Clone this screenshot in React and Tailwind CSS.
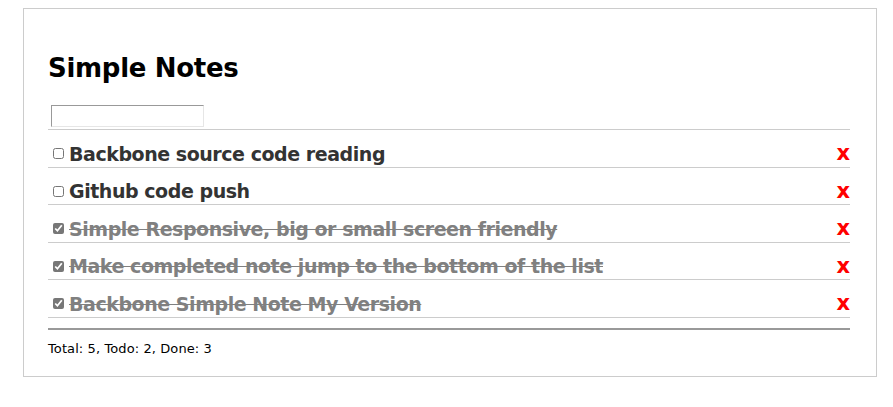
import React, { useState } from 'react';

const initialNotes = [
  { id: 1, title: 'Backbone source code reading', done: false },
  { id: 2, title: 'Github code push', done: false },
  { id: 3, title: 'Simple Responsive, big or small screen friendly', done: true },
  { id: 4, title: 'Make completed note jump to the bottom of the list', done: true },
  { id: 5, title: 'Backbone Simple Note My Version', done: true },
];

const App = () => {
  const [notes, setNotes] = useState(initialNotes);
  const [text, setText] = useState('');

  const toggle = (id) => setNotes(notes.map((n) => (n.id === id ? { ...n, done: !n.done } : n)));
  const remove = (id) => setNotes(notes.filter((n) => n.id !== id));

  const done = notes.filter((n) => n.done).length;

  return (
    <div className="w-[893px] h-[407px] bg-white pt-2 pl-[23px] font-['DejaVu_Sans',sans-serif]">
      <div className="w-[854px] h-[369px] border border-[#cccccc] pl-6 pr-[26px] pt-[44px]">
        <h1 className="text-[26px] leading-[30px] font-bold text-black tracking-[-0.3px]">Simple Notes</h1>

        <div className="mt-[22px] pl-[3px] pb-[2px] border-b border-[#cccccc]">
          <input
            value={text}
            onChange={(e) => setText(e.target.value)}
            className="block w-[153px] h-[22px] border border-t-[#999] border-l-[#999] border-b-[#e6e6e6] border-r-[#e6e6e6] outline-none text-sm px-1"
          />
        </div>

        {/* notes list */}
        <ul>
          {notes.map((note) => (
            <li key={note.id} className="flex items-center h-[37.5px] pt-[11px] border-b border-[#cccccc]">
              <input
                type="checkbox"
                checked={note.done}
                onChange={() => toggle(note.id)}
                className="ml-[5px] mr-[5px] w-[11px] h-[11px] accent-[#777]"
              />
              <span
                className={`flex-1 text-[19px] font-bold tracking-[-0.45px] ${
                  note.done ? 'text-[#808080] line-through' : 'text-[#333333]'
                }`}
              >
                {note.title}
              </span>
              <button onClick={() => remove(note.id)} className="text-[21px] font-bold text-[#ff0000] leading-none">
                x
              </button>
            </li>
          ))}
        </ul>

        <div className="mt-[10px] border-t-2 border-[#999999]" />
        <p className="mt-[9px] text-[13px] text-black tracking-[0.1px]">
          Total: {notes.length}, Todo: {notes.length - done}, Done: {done}
        </p>
      </div>
    </div>
  );
};

export default App;
